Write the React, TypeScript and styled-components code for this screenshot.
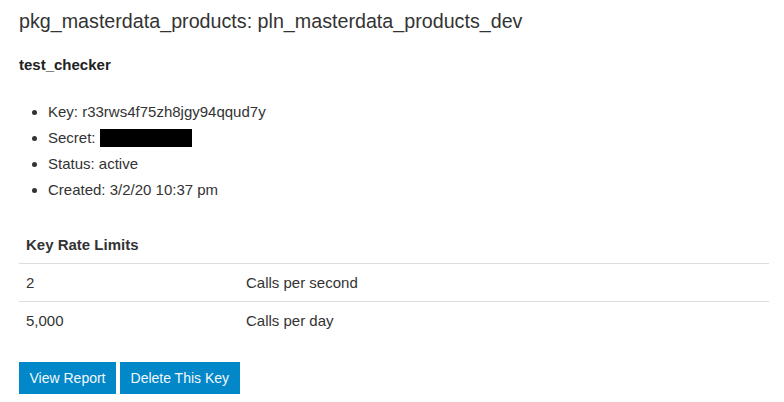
import React from "react";
import styled, { createGlobalStyle } from "styled-components";

const Global = createGlobalStyle`
  html, body { margin: 0; padding: 0; background: #fff; }
  body {
    font-family: "Liberation Sans", Arial, sans-serif;
    font-size: 15px;
    color: #333;
  }
`;

const Page = styled.div`
  padding: 9px 15px 0 19px;
`;

const Title = styled.h2`
  margin: 0;
  font-size: 19.7px;
  line-height: 24px;
  font-weight: normal;
  color: #333;
`;

const KeyName = styled.h3`
  margin: 22px 0 0;
  font-size: 15px;
  line-height: 20px;
  font-weight: bold;
  color: #222;
`;

const List = styled.ul`
  margin: 24px 0 0;
  padding-left: 29px;
`;

const Item = styled.li`
  line-height: 26px;
`;

const Redacted = styled.span`
  display: inline-block;
  width: 92px;
  height: 18px;
  background: #000;
  vertical-align: -4px;
`;

const Table = styled.table`
  margin-top: 23px;
  width: 100%;
  border-collapse: collapse;
`;

const HeadCell = styled.th`
  text-align: left;
  font-weight: bold;
  padding: 8px 7px;
  line-height: 21px;
  border-bottom: 1px solid #ddd;
`;

const Row = styled.tr<{ $last?: boolean }>`
  border-bottom: ${(p) => (p.$last ? "none" : "1px solid #ddd")};
`;

const Cell = styled.td<{ $w?: string }>`
  padding: 8px 7px;
  line-height: 21px;
  width: ${(p) => p.$w ?? "auto"};
`;

const Actions = styled.div`
  margin-top: 23px;
  display: flex;
  gap: 4px;
`;

const Button = styled.button`
  font-family: "Liberation Sans", Arial, sans-serif;
  font-size: 14px;
  line-height: 20px;
  padding: 6px 10.5px;
  border: none;
  border-radius: 0;
  background: #0287c9;
  color: #f4f8fb;
  cursor: pointer;
`;

const limits = [
  { value: "2", label: "Calls per second" },
  { value: "5,000", label: "Calls per day" },
];

export default function App() {
  return (
    <>
      <Global />
      <Page>
        <Title>pkg_masterdata_products: pln_masterdata_products_dev</Title>
        <KeyName>test_checker</KeyName>
        <List>
          <Item>Key: r33rws4f75zh8jgy94qqud7y</Item>
          <Item>
            Secret: <Redacted />
          </Item>
          <Item>Status: active</Item>
          <Item>Created: 3/2/20 10:37 pm</Item>
        </List>
        <Table>
          <thead>
            <tr>
              <HeadCell colSpan={2}>Key Rate Limits</HeadCell>
            </tr>
          </thead>
          <tbody>
            {limits.map((l, i) => (
              <Row key={l.label} $last={i === limits.length - 1}>
                <Cell $w="206px">{l.value}</Cell>
                <Cell>{l.label}</Cell>
              </Row>
            ))}
          </tbody>
        </Table>
        <Actions>
          <Button>View Report</Button>
          <Button>Delete This Key</Button>
        </Actions>
      </Page>
    </>
  );
}
